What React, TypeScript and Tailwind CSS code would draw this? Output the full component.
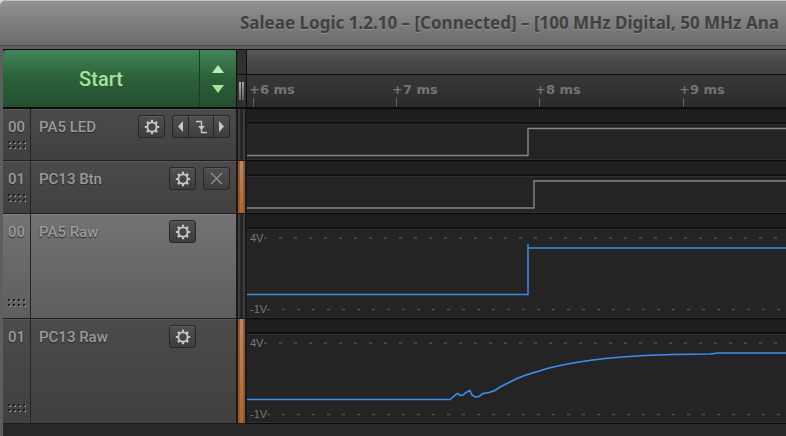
import type { ReactNode } from "react";

const TICKS = [
  { x: 6, label: "+6 ms" },
  { x: 149, label: "+7 ms" },
  { x: 292, label: "+8 ms" },
  { x: 436, label: "+9 ms" },
];

const EDGE = 4000;

const PC13_CURVE =
  "M0 64.5H203L206 62L209 59.5L211 58.5L213 60.5L216 60L219 57.5L223 55.5L225 60L228 62L232 61.5L236 58.5L242 57.5L248 55.5L253 52L261 48L270 43.5L279 40L289 37L302 33L313 30.5L326 28L342 25.5L358 23.5L375 22L398 20.5L425 19.5L463 19L471 18H" +
  EDGE;

function Gear() {
  return (
    <svg viewBox="0 0 16 16" className="size-4" fill="none" stroke="#c6c6c6" aria-hidden="true">
      <circle cx="8" cy="8" r="4.6" strokeWidth="1.9" />
      <path
        strokeWidth="2.2"
        d="M8 3.2V.8M8 12.8v2.4M3.2 8H.8M12.8 8h2.4M4.6 4.6 2.9 2.9M11.4 11.4l1.7 1.7M4.6 11.4l-1.7 1.7M11.4 4.6l1.7-1.7"
      />
    </svg>
  );
}

function Grip() {
  const xs = [0, 5, 10, 15];
  return (
    <svg width="18" height="9" aria-hidden="true">
      {xs.map((x) =>
        [0, 5].map((y) => (
          <g key={`${x}-${y}`}>
            <rect x={x + 1} y={y + 1} width="2" height="2" fill="#8a8a8a" />
            <rect x={x} y={y} width="2" height="2" fill="#1c1c1c" />
          </g>
        )),
      )}
    </svg>
  );
}

const BUTTON =
  "flex h-[23px] items-center justify-center border-[#262626] bg-linear-to-b from-[#505050] to-[#3d3d3d] shadow-[inset_0_1px_0_#5c5c5c]";

function SettingsButton({ name }: { name: string }) {
  return (
    <button aria-label={`${name} settings`} className={`${BUTTON} w-[27px] rounded-[3px] border`}>
      <Gear />
    </button>
  );
}

function TriggerButtons() {
  return (
    <div className="flex">
      <button aria-label="Previous edge" className={`${BUTTON} w-4 rounded-l-[3px] border border-r-0`}>
        <svg width="5" height="11" aria-hidden="true">
          <path d="M5 0v11L0 5.5z" fill="#c6c6c6" />
        </svg>
      </button>
      <button aria-label="Trigger on falling edge" className={`${BUTTON} w-[26px] border`}>
        <svg width="11" height="14" fill="none" stroke="#c6c6c6" aria-hidden="true">
          <path d="M0 1.5h5.5v11H11" strokeWidth="1.4" />
          <path d="M2 6h7L5.5 10z" fill="#c6c6c6" stroke="none" />
        </svg>
      </button>
      <button aria-label="Next edge" className={`${BUTTON} w-4 rounded-r-[3px] border border-l-0`}>
        <svg width="5" height="11" aria-hidden="true">
          <path d="M0 0v11l5-5.5z" fill="#c6c6c6" />
        </svg>
      </button>
    </div>
  );
}

function ClearTriggerButton() {
  return (
    <button aria-label="Clear trigger" className={`${BUTTON} w-[27px] rounded-[3px] border`}>
      <svg width="13" height="13" stroke="#969696" strokeWidth="1.2" aria-hidden="true">
        <path d="M1 1l11 11M12 1 1 12" />
      </svg>
    </button>
  );
}

type ChannelProps = {
  index: string;
  name: string;
  size: string;
  selected?: boolean;
  marked?: boolean;
  extra?: ReactNode;
  children: ReactNode;
};

function Channel({ index, name, size, selected, marked, extra, children }: ChannelProps) {
  const tone = selected
    ? "from-[#737373] to-[#5e5e5e] text-[#9b9b9b] shadow-[inset_0_1px_0_#808080]"
    : "from-[#4b4b4b] to-[#404040] text-[#9a9a9a] shadow-[inset_0_1px_0_#585858]";
  return (
    <section className={`flex ${size}`} aria-label={name}>
      <div
        className={`flex w-[233px] shrink-0 border-b border-[#1e1e1e] bg-linear-to-b text-[15px] leading-5 font-medium [text-shadow:0_1px_1px_#2a2a2a] ${tone}`}
      >
        <div className="flex w-7 shrink-0 flex-col items-center justify-between border-r border-[#242424] pt-2 pb-2.5">
          <span>{index}</span>
          <Grip />
        </div>
        <span className="grow pt-2 pl-2">{name}</span>
        <div className="flex items-start gap-[7px] pt-1.5 pr-1.5">
          <SettingsButton name={name} />
          {extra ?? <span className="w-[27px]" />}
        </div>
      </div>
      <div className="w-[11px] shrink-0 border-x-2 border-b border-[#191919]">
        <div
          className={`h-full border-x-2 ${
            marked
              ? "border-[#8f5a33] bg-linear-to-b from-[#b98a64] to-[#b8631e]"
              : "border-[#3c3c3c] bg-[#262626]"
          }`}
        />
      </div>
      <div className="flex min-w-0 grow flex-col border-b border-[#0a0a0a] bg-[#242424]">
        <div className="h-[15px] shrink-0 border-t border-b-2 border-t-[#1a1a1a] border-b-[#121212] bg-[#1f1f1f]" />
        <div className="min-h-0 grow border-y border-[#303030]">
          <svg className="block h-full w-full" fill="none">
            {children}
          </svg>
        </div>
      </div>
    </section>
  );
}

function VoltageGrid() {
  return (
    <>
      <g stroke="#505050" strokeWidth="1.5" strokeDasharray="3 12">
        <path d={`M17 8H${EDGE}`} />
        <path d={`M20 79.5H${EDGE}`} />
      </g>
      <g className="font-['Liberation_Sans',Arial,sans-serif] text-[11px]" fill="#7a7a7a">
        <text x="3" y="12">4V</text>
        <text x="3" y="83">-1V</text>
      </g>
    </>
  );
}

export default function App() {
  return (
    <div className="min-h-screen overflow-hidden bg-[#cfe0e0] font-[Roboto,sans-serif]">
      <div className="flex min-h-screen flex-col rounded-tl-md bg-[#5e5e5e]">
        <header className="h-[46px] overflow-hidden rounded-tl-md border-t border-b border-t-[#c4c4c4] border-b-[#4a4a4a] bg-linear-to-b from-[#929292] to-[#6b6b6b] pl-60">
          <h1 className="pt-2.5 font-['Noto_Sans','Open_Sans',sans-serif] text-[17px] leading-6 font-bold whitespace-nowrap text-[#414141] [text-shadow:0_1px_0_#8f8f8f]">
            Saleae Logic 1.2.10 – [Connected] – [100 MHz Digital, 50 MHz Ana
          </h1>
        </header>

        <main className="mt-[3px] ml-[3px] flex grow flex-col bg-[#292929]">
          <div className="flex h-[60px] border-t border-b-2 border-[#0d0d0d]">
            <div className="flex w-[233px] shrink-0 overflow-hidden rounded-tl-[4px] bg-linear-to-b from-[#418457] via-[#2c6039] via-50% to-[#244f30]">
              <button className="grow border-r border-[#1b3d25] text-[20px] leading-6 font-medium text-[#a5e29b]">
                Start
              </button>
              <div className="flex w-9 flex-col items-center justify-center gap-3">
                <button aria-label="Increase capture time">
                  <svg width="12" height="8" className="block" aria-hidden="true">
                    <path d="M0 8 6 0l6 8z" fill="#b9ecb2" />
                  </svg>
                </button>
                <button aria-label="Decrease capture time">
                  <svg width="12" height="8" className="block" aria-hidden="true">
                    <path d="M0 0h12L6 8z" fill="#a5e29b" />
                  </svg>
                </button>
              </div>
            </div>
            <div className="flex w-[11px] shrink-0 flex-col border-x border-[#0d0d0d] bg-[#303030]">
              <div className="h-[25px] shrink-0 border-b border-[#0d0d0d]" />
              <div className="flex grow items-center justify-center gap-px">
                <span className="h-[18px] w-[2px] bg-linear-to-b from-[#b0b0b0] to-[#6a6a6a]" />
                <span className="h-[18px] w-[2px] bg-linear-to-b from-[#a0a0a0] to-[#606060]" />
              </div>
            </div>
            <div className="flex min-w-0 grow flex-col">
              <div className="h-[25px] shrink-0 border-b border-[#0d0d0d] bg-linear-to-b from-[#5a5a5a] via-[#484848] via-50% to-[#414141]" />
              <svg className="block h-8 w-full bg-linear-to-b from-[#383838] to-[#2b2b2b]">
                {TICKS.map((tick) => (
                  <g key={tick.label}>
                    <text
                      x={tick.x - 4}
                      y="19"
                      fill="#747474"
                      className="font-['DejaVu_Sans',sans-serif] text-[13px] font-bold"
                    >
                      {tick.label}
                    </text>
                    <rect x={tick.x} y="23" width="1" height="9" fill="#626262" />
                  </g>
                ))}
              </svg>
            </div>
          </div>

          <Channel index="00" name="PA5 LED" size="h-[52px]" extra={<TriggerButtons />}>
            <path d={`M0 30.5H281V3.5H${EDGE}`} stroke="#858585" strokeWidth="1.4" />
          </Channel>
          <Channel index="01" name="PC13 Btn" size="h-[53px]" marked extra={<ClearTriggerButton />}>
            <path d={`M0 31H287V4H${EDGE}`} stroke="#858585" strokeWidth="1.4" />
          </Channel>
          <Channel index="00" name="PA5 Raw" size="h-[105px]" selected>
            <VoltageGrid />
            <path d={`M0 64.5H281V14V18H${EDGE}`} stroke="#3a8be6" strokeWidth="1.5" />
          </Channel>
          <Channel index="01" name="PC13 Raw" size="h-[105px]" marked>
            <VoltageGrid />
            <path d={PC13_CURVE} stroke="#3a90f0" strokeWidth="1.6" />
          </Channel>
        </main>
      </div>
    </div>
  );
}
